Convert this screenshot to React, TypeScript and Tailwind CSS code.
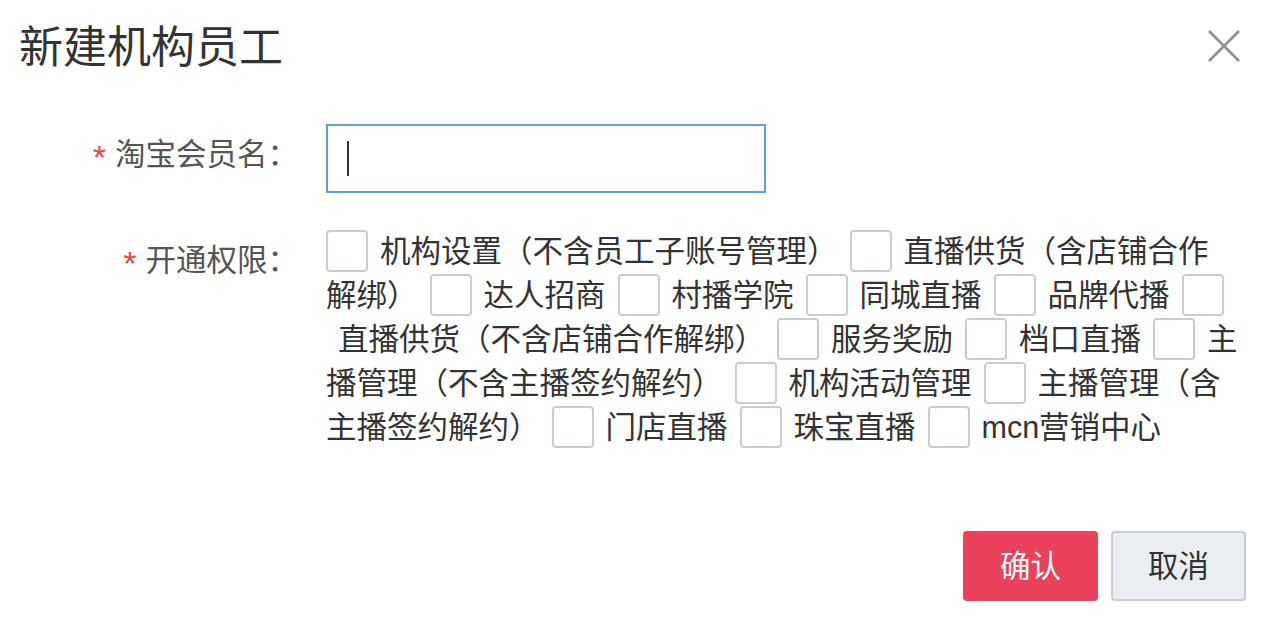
import React from "react";

const permissions = [
  "机构设置（不含员工子账号管理）",
  "直播供货（含店铺合作解绑）",
  "达人招商",
  "村播学院",
  "同城直播",
  "品牌代播",
  "直播供货（不含店铺合作解绑）",
  "服务奖励",
  "档口直播",
  "主播管理（不含主播签约解约）",
  "机构活动管理",
  "主播管理（含主播签约解约）",
  "门店直播",
  "珠宝直播",
  "mcn营销中心",
];

function FieldLabel({ text, className }: { text: string; className: string }) {
  return (
    <div
      className={`w-[298px] shrink-0 flex justify-end items-center h-[44px] text-[30.5px] leading-[44px] text-[#555] ${className}`}
    >
      <span className="text-[34px] text-[#f0463c] mr-[9px] translate-y-[3px]">*</span>
      <span>{text}</span>
    </div>
  );
}

function CloseIcon() {
  return (
    <svg width="32" height="32" viewBox="0 0 32 32" fill="none" stroke="#8f8f8f" strokeWidth="2.6">
      <path d="M1 1 31 31" />
      <path d="M31 1 1 31" />
    </svg>
  );
}

export default function App() {
  return (
    <div className="w-[1271px] h-[637px] bg-white text-[#333] font-['Liberation_Sans','Noto_Sans_CJK_SC',sans-serif]">
      <div className="flex items-center justify-between h-[96px] pl-[19px] pr-[31px]">
        <h1 className="text-[44px] leading-[52px] font-normal text-[#333]">新建机构员工</h1>
        <button type="button" className="w-[32px] h-[32px] -mt-[4px]">
          <CloseIcon />
        </button>
      </div>

      <div className="flex items-start mt-[28px]">
        <FieldLabel text="淘宝会员名：" className="mt-[8px]" />
        <div className="ml-[28px] w-[440px] h-[69px] border-2 border-[#5c9ee0] flex items-center pl-[19px]">
          <span className="w-[2px] h-[35px] bg-[#333]" />
        </div>
      </div>

      <div className="flex items-start mt-[36px]">
        <FieldLabel text="开通权限：" className="mt-[9px]" />
        <div className="ml-[28px] w-[912px] text-[30.5px] leading-[44px] text-[#333]">
          {permissions.map((p) => (
            <React.Fragment key={p}>
              <span className="inline-block w-[42px] h-[42px] border-2 border-[#c8ccd4] rounded-[4px] bg-white align-[-10px]" />
              <span className="ml-[12px] mr-[12px]">{p}</span>
            </React.Fragment>
          ))}
        </div>
      </div>

      <div className="flex justify-end gap-[13px] pr-[25px] mt-[82px]">
        <button
          type="button"
          className="w-[135px] h-[70px] rounded-[4px] bg-[#e9425a] text-white text-[30.5px] leading-none"
        >
          确认
        </button>
        <button
          type="button"
          className="w-[135px] h-[70px] rounded-[4px] bg-[#eaeef2] border-2 border-[#c9ced5] text-[#333] text-[30.5px] leading-none"
        >
          取消
        </button>
      </div>
    </div>
  );
}
